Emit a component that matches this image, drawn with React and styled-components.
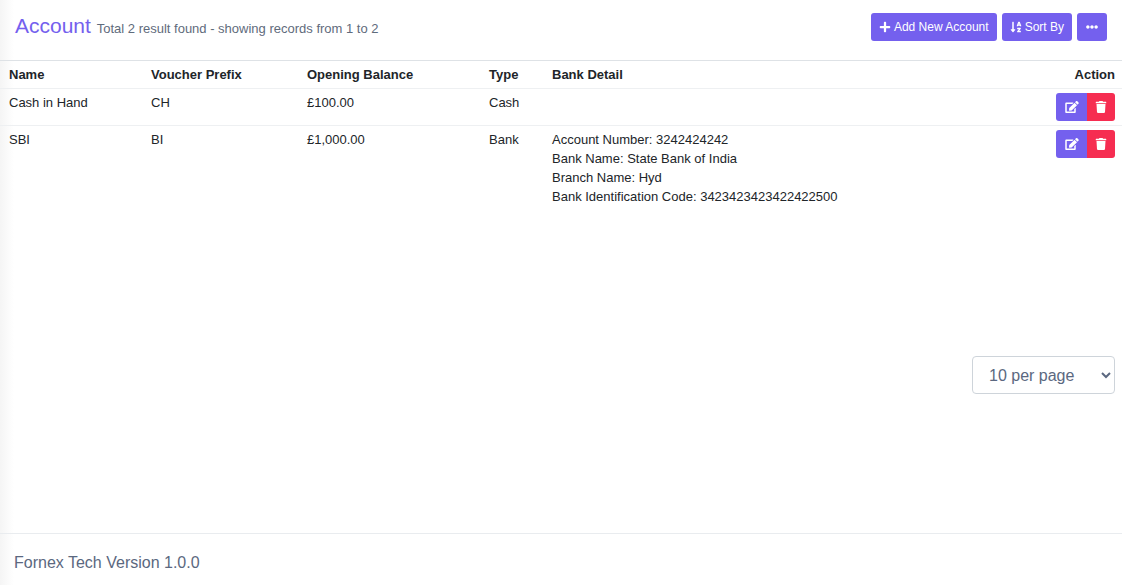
import React from 'react';
import styled, { createGlobalStyle } from 'styled-components';
import { FaEdit, FaEllipsisH, FaPlus, FaSortAlphaDown, FaTrash } from 'react-icons/fa';

const GlobalStyle = createGlobalStyle`
  *, *::before, *::after {
    box-sizing: border-box;
  }

  body {
    margin: 0;
    background-color: #fff;
    color: #5b6880;
    font-family: "Liberation Sans", Arial, sans-serif;
    font-size: 16px;
    line-height: 24px;
  }
`;

const Page = styled.div`
  display: flex;
  flex-direction: column;
  min-height: 100vh;
  background: linear-gradient(to right, #f5f5f5, #fff 14px);
`;

const Header = styled.header`
  display: flex;
  justify-content: space-between;
  align-items: flex-start;
  padding: 13px 15px 19px;
`;

const Title = styled.h1`
  margin: 0;
  color: #7460ee;
  font-size: 21px;
  font-weight: 400;
  line-height: 26px;
`;

const Summary = styled.small`
  color: #5f6b7c;
  font-size: 13px;
  line-height: 16px;
`;

const Toolbar = styled.div`
  display: flex;
  gap: 5px;
`;

const Button = styled.button`
  display: inline-flex;
  align-items: center;
  justify-content: center;
  gap: 3px;
  min-width: 30px;
  height: 28px;
  padding: 0 8px;
  border: 0;
  border-radius: 3px;
  background-color: ${({ $danger }) => ($danger ? '#f62d51' : '#7460ee')};
  color: #fff;
  font-family: inherit;
  font-size: 12px;
  line-height: 18px;
  cursor: pointer;
`;

const ButtonGroup = styled.div`
  display: inline-flex;
  vertical-align: top;

  ${Button}:first-child {
    width: 31px;
    border-radius: 3px 0 0 3px;
  }

  ${Button}:last-child {
    width: 28px;
    min-width: 0;
    border-radius: 0 3px 3px 0;
  }

  svg {
    flex-shrink: 0;
    width: 14px;
    height: 12px;
  }
`;

const Content = styled.main`
  flex: 1;
`;

const TableWrap = styled.div`
  min-height: 296px;
`;

const Table = styled.table`
  width: 100%;
  border-collapse: collapse;
  border-top: 1px solid #dee2e6;
  color: #212529;
  font-size: 13px;
  line-height: 19px;
`;

const Row = styled.tr`
  border-top: 1px solid #eef0f2;
`;

const HeadCell = styled.th`
  width: ${({ $width }) => $width || 'auto'};
  padding: 4px;
  font-weight: 700;
  text-align: ${({ $align }) => $align || 'left'};

  &:first-child {
    padding-left: 9px;
  }

  &:last-child {
    padding-right: 7px;
  }
`;

const Cell = styled.td`
  padding: 4px;
  text-align: ${({ $align }) => $align || 'left'};
  vertical-align: top;

  &:first-child {
    padding-left: 9px;
  }

  &:last-child {
    padding-right: 7px;
  }
`;

const Pager = styled.div`
  display: flex;
  justify-content: flex-end;
  padding: 0 7px;
`;

const PageSize = styled.select`
  width: 143px;
  height: 38px;
  padding: 6px 0 6px 12px;
  border: 1px solid #ced4da;
  border-radius: 4px;
  background-color: #fff;
  color: #5b6880;
  font-family: inherit;
  font-size: 16px;
  line-height: 24px;
`;

const Footer = styled.footer`
  padding: 17px 14px 10px;
  border-top: 1px solid #e9ecef;
`;

const accounts = [
  { name: 'Cash in Hand', prefix: 'CH', balance: '£100.00', type: 'Cash', details: [] },
  {
    name: 'SBI',
    prefix: 'BI',
    balance: '£1,000.00',
    type: 'Bank',
    details: [
      'Account Number: 3242424242',
      'Bank Name: State Bank of India',
      'Branch Name: Hyd',
      'Bank Identification Code: 3423423423422422500',
    ],
  },
];

const App = () => {
  return (
    <Page>
      <GlobalStyle />
      <Header>
        <Title>
          Account <Summary>Total 2 result found - showing records from 1 to 2</Summary>
        </Title>
        <Toolbar>
          <Button type="button"><FaPlus />Add New Account</Button>
          <Button type="button"><FaSortAlphaDown />Sort By</Button>
          <Button type="button" aria-label="More options"><FaEllipsisH /></Button>
        </Toolbar>
      </Header>

      <Content>
        <TableWrap>
          <Table>
            <thead>
              <tr>
                <HeadCell $width="147px">Name</HeadCell>
                <HeadCell $width="156px">Voucher Prefix</HeadCell>
                <HeadCell $width="182px">Opening Balance</HeadCell>
                <HeadCell $width="63px">Type</HeadCell>
                <HeadCell>Bank Detail</HeadCell>
                <HeadCell $width="80px" $align="right">Action</HeadCell>
              </tr>
            </thead>
            <tbody>
              {accounts.map((account) => (
                <Row key={account.name}>
                  <Cell>{account.name}</Cell>
                  <Cell>{account.prefix}</Cell>
                  <Cell>{account.balance}</Cell>
                  <Cell>{account.type}</Cell>
                  <Cell>
                    {account.details.map((line) => (
                      <div key={line}>{line}</div>
                    ))}
                  </Cell>
                  <Cell $align="right">
                    <ButtonGroup>
                      <Button type="button" aria-label={`Edit ${account.name}`}><FaEdit /></Button>
                      <Button type="button" $danger aria-label={`Delete ${account.name}`}><FaTrash /></Button>
                    </ButtonGroup>
                  </Cell>
                </Row>
              ))}
            </tbody>
          </Table>
        </TableWrap>

        <Pager>
          <PageSize aria-label="Records per page" defaultValue="10">
            <option value="10">10 per page</option>
            <option value="25">25 per page</option>
            <option value="50">50 per page</option>
            <option value="100">100 per page</option>
          </PageSize>
        </Pager>
      </Content>

      <Footer>Fornex Tech Version 1.0.0</Footer>
    </Page>
  );
};

export default App;
